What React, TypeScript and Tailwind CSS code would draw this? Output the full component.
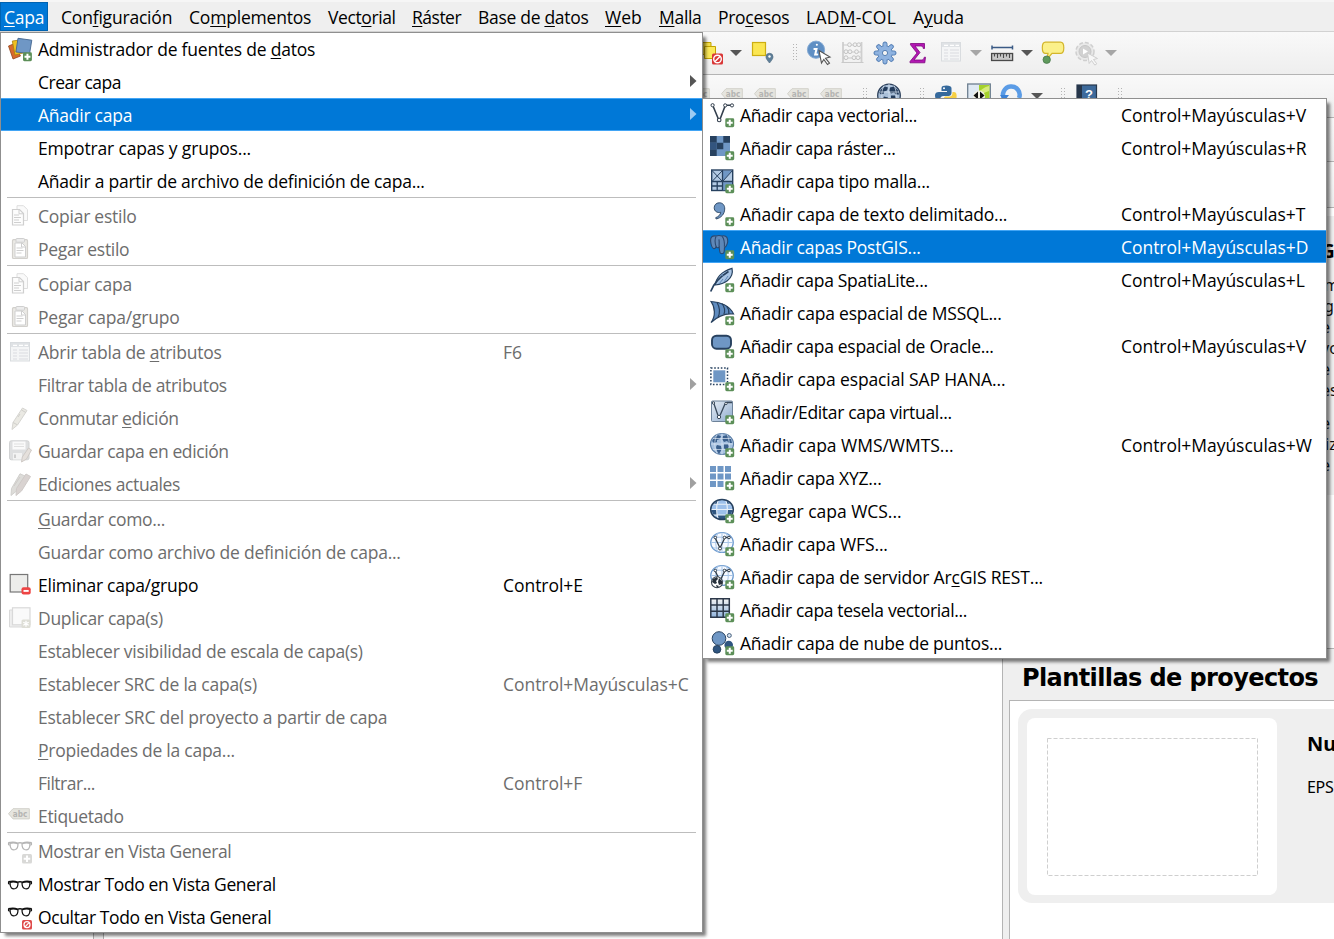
import React from "react";

type IconFn = () => React.ReactNode;

const NAVY = "#27415f";
const BLUE = "#6f97c5";

function Plus() {
  return (
    <g>
      <rect x="15.3" y="15.3" width="8.9" height="8.9" rx="1.4" fill="#5c8f58" />
      <path d="M19.75 16.800v5.900M16.800 19.750h5.900" stroke="#fff" strokeWidth="2" />
    </g>
  );
}

function Svg({ children, className = "" }: { children: React.ReactNode; className?: string }) {
  return (
    <svg viewBox="0 0 24 24" className={"block h-6 w-6 shrink-0 overflow-visible " + className} fill="none">
      {children}
    </svg>
  );
}

/* ---------- submenu icons ---------- */

const VectorIcon: IconFn = () => (
  <Svg>
    <g stroke="#333f4d" strokeWidth="1.6" fill="#fff">
      <path d="M3.200 3.500 8.300 15.800M10.200 15.800 14.800 3.700M16.500 2.300h5" fill="none" />
      <circle cx="2.600" cy="2.200" r="1.600" strokeWidth="1" />
      <circle cx="15.200" cy="2.400" r="1.600" strokeWidth="1" />
      <circle cx="22" cy="2.400" r="1.600" strokeWidth="1" />
      <circle cx="9.200" cy="17" r="1.800" strokeWidth="1.100" />
    </g>
    <Plus />
  </Svg>
);
const RasterIcon: IconFn = () => (
  <Svg>
    <rect width="20" height="20" fill={BLUE} />
    <path d="M0 0h6.700v6.700H0zM13.300 0H20v6.700h-6.700zM6.700 6.700h6.600v6.600H6.700zM0 13.300h6.700V20H0z" fill={NAVY} />
    <path d="M0 6.700h6.700v6.600H0z" fill="#33557f" />
    <Plus />
  </Svg>
);
const MeshIcon: IconFn = () => (
  <Svg>
    <rect x="1.700" y="1" width="21" height="20.500" fill="#b3cae3" stroke={NAVY} strokeWidth="1.400" />
    <path d="M13 1.700h9L13 12z" fill="#6f97c5" />
    <path d="M12.500 13.200h9.500v8h-9.500z" fill="#6f97c5" />
    <path d="M12.500 21V1M2 12.500h20.500M7.200 12.500V21M2 17h10.500" stroke={NAVY} strokeWidth="1.300" />
    <path d="M2 1.500l10.500 11M12.500 1.500 2 12.500M22.500 1.500 13 12" stroke={NAVY} strokeWidth="1" />
    <Plus />
  </Svg>
);
const CommaIcon: IconFn = () => (
  <Svg>
    <path d="M9.300.8c3.600 0 5.600 2.600 5.400 6.300-.2 4.800-3.200 8.600-8.500 9.900l-.5-1.300c3-1.200 4.700-2.900 5-5.400-3.500.9-6.500-1.100-6.500-4.500C4.200 2.900 6.300.8 9.300.8z" fill="#6f97c5" stroke={NAVY} strokeWidth=".9" />
    <Plus />
  </Svg>
);
const ElephantIcon: IconFn = () => (
  <Svg>
    <path d="M6 1C2.500.3.200 2 .6 6c.4 4 1.600 7 3 7.600 1.200.4 1.800-.8 2.600-1.600.6 1 2.300.8 3 .3.300 2.700.2 4.700 1.200 5.800 1.300 1.100 3.300.6 3.700-1.300.3-1.800.2-2.800.4-4.200 2.200-1.300 3.700-5.300 3.100-8.300C17 1.200 14.500.2 12 1.100 10 .2 8 .3 6 1z" fill="#5f88b8" stroke="#2a4870" strokeWidth="1.100" />
    <path d="M6 1.500c-1.500 3-1.300 6 .2 10.500M12.200 1.300c2 2.500 2.500 5 2.200 10.500M9.300 12.300c-.6-3 .4-5-.4-8" stroke="#2a4870" strokeWidth="1.100" />
    <Plus />
  </Svg>
);
const FeatherIcon: IconFn = () => (
  <Svg>
    <path d="M22 .3c1 4.200-.5 9-4.700 12.500-3 2.400-7 3.700-12 4.200C6 10.500 11 3.500 22 .3z" fill="#a8c4e4" stroke={NAVY} strokeWidth="1.200" />
    <path d="M.7 23.500C3 17 8 10 18.500 3.500" stroke={NAVY} strokeWidth="1.700" />
    <path d="M9 16l4-5M14 14l4-6M12 6l1 2" stroke="#5f87b5" strokeWidth="1" />
    <Plus />
  </Svg>
);
const MssqlIcon: IconFn = () => (
  <Svg>
    <path d="M1 .5c9 .3 19 4 22.500 12.500C16 12 9 14 1 21.500 6 15 5 6 1 .5z" fill="#5f8cc0" stroke={NAVY} strokeWidth="1.200" />
    <path d="M7 1.500c3 5 3.300 10 1 15M12 2.500c3 4 3.500 7 1.800 11M16.500 5c2 2.500 2.800 5 2.300 8" stroke={NAVY} strokeWidth="1.200" />
    <Plus />
  </Svg>
);
const OracleIcon: IconFn = () => (
  <Svg>
    <rect x="2" y="1.700" width="19" height="13" rx="4.500" fill={BLUE} stroke={NAVY} strokeWidth="1.900" />
    <Plus />
  </Svg>
);
const HanaIcon: IconFn = () => (
  <Svg>
    <rect x="3.300" y="3.300" width="12" height="12" fill={BLUE} />
    <rect x=".9" y=".9" width="16.600" height="16.600" stroke={NAVY} strokeWidth="1.500" strokeDasharray="1.600 1.700" />
    <Plus />
  </Svg>
);
const VirtualIcon: IconFn = () => (
  <Svg>
    <defs>
      <linearGradient id="virt" x1="0" y1="0" x2="1" y2="1">
        <stop offset="0" stopColor="#e6edf5" />
        <stop offset="1" stopColor="#8faccf" />
      </linearGradient>
    </defs>
    <rect x="1.500" y="1" width="21" height="20.500" rx="1" fill="url(#virt)" stroke="#6d8299" />
    <path d="M2 2.500h1.500l4.500 13M10 15.500l5-11.500 2-1.500h5" stroke="#3a4a5c" strokeWidth="1.300" />
    <circle cx="9" cy="17" r="1.700" fill="#fff" stroke="#3a4a5c" />
    <circle cx="3.500" cy="3" r="1.200" fill="#fff" stroke="#3a4a5c" />
    <circle cx="16" cy="3.500" r="1.200" fill="#fff" stroke="#3a4a5c" />
    <Plus />
  </Svg>
);
const worldLand = "M4 5l4-3 3 1-1 3-3 1 0 2-3 1-2-2zM13 3l4-1 4 4 1 4-3 0-2-2-3 1-2-3zM7 12l4 1 1 3-3 5-2-3-1-4zM14 11l4 0 1 3-3 4-2-3z";
const WmsIcon: IconFn = () => (
  <Svg>
    <ellipse cx="12" cy="11" rx="11.500" ry="10.500" fill="#a6c1e0" stroke="#5b7ea6" strokeWidth="1.200" />
    <path d={worldLand} fill="#3a5f8c" />
    <path d="M1 11h22M3 5.500h18M12 .5v21M7 1.500c-3 6-3 13 0 19M17 1.500c3 6 3 13 0 19M3 16.500h18" stroke="#dbe7f3" strokeWidth=".7" />
    <Plus />
  </Svg>
);
const XyzIcon: IconFn = () => (
  <Svg>
    <path d="M0 0h6v6H0zM7.500 0h6v6h-6zM15 0h6v6h-6zM0 7.500h6v6H0zM7.500 7.500h6v6h-6zM15 7.500h6v6h-6zM0 15h6v6H0zM7.500 15h6v6h-6z" fill={BLUE} />
    <Plus />
  </Svg>
);
const WcsIcon: IconFn = () => (
  <Svg>
    <ellipse cx="12" cy="10.500" rx="11.300" ry="10" fill="#9dc0ea" />
    <path d="M1 10.500h6V16H3.500zM17 10.500h6L20.500 16H17zM7 16h10l-2 4.300H9zM3.500 5.200 8 1.500 7 5.200zM20.500 5.200 16 1.500l1 3.700z" fill="#2f5580" />
    <path d="M1 10.500h22M3 5.200h18M3 16h18M8 1.500C6.300 7 6.300 14 8 19.500M16 1.500c1.700 5.500 1.700 12.500 0 18" stroke="#eaf1f8" strokeWidth="1.100" />
    <ellipse cx="12" cy="10.500" rx="11.300" ry="10" stroke={NAVY} strokeWidth="1.500" />
    <Plus />
  </Svg>
);
const WfsGlobe = () => (
  <g>
    <ellipse cx="12" cy="10.500" rx="11.300" ry="10" fill="#f7faff" stroke="#6c9ace" strokeWidth="1.200" />
    <path d="M1 10.500h22M3 5.200h18M3 16h18M12 .5v20M8 1C5 7 5 14 8 20M16 1c3 6 3 13 0 19" stroke="#a9c6e8" strokeWidth="1" />
    <path d="M5.500 6.500 9.500 15M10.500 15l4-8.500M15 5.500h4" stroke="#2d3945" strokeWidth="1.300" />
    <g fill="#fff" stroke="#2d3945">
      <circle cx="5.300" cy="5.500" r="1.300" />
      <circle cx="14.500" cy="5.500" r="1.300" />
      <circle cx="19" cy="5.500" r="1.300" />
      <circle cx="10" cy="16.500" r="1.500" />
    </g>
  </g>
);
const WfsIcon: IconFn = () => (
  <Svg>
    <WfsGlobe />
    <Plus />
  </Svg>
);
const ArcgisIcon: IconFn = () => (
  <Svg>
    <WfsGlobe />
    <circle cx="7" cy="17.300" r="5.500" fill="#fff" stroke="#39434d" strokeWidth="1.100" />
    <path d="M3 14l4-2 1 2-2 2 1 2-2 1-3-2zM9 13l3 3 0 3-3 1-1-3zM6 20l3 1-2 2z" fill="#27313b" />
    <Plus />
  </Svg>
);
const TileIcon: IconFn = () => (
  <Svg>
    <defs>
      <linearGradient id="tile" x1="0" y1="0" x2="0" y2="1">
        <stop offset="0" stopColor="#f3f3f3" />
        <stop offset="1" stopColor="#8fb3dc" />
      </linearGradient>
    </defs>
    <rect x=".8" y=".8" width="18.500" height="18.500" fill="url(#tile)" />
    <path d="M.8.8h18.500v18.500H.8zM7 .8v18.500M13.200.8v18.500M.8 7h18.500M.8 13.200h18.500" stroke="#2c3849" strokeWidth="1.500" />
    <Plus />
  </Svg>
);
const CloudIcon: IconFn = () => (
  <Svg>
    <circle cx="9" cy="7.500" r="6.800" fill={BLUE} stroke={NAVY} strokeWidth="1" />
    <circle cx="19.300" cy="4.500" r="2" fill="#d7e3f0" stroke="#48617e" />
    <circle cx="18.700" cy="14" r="4.300" fill="#2f5580" />
    <circle cx="7" cy="18.300" r="3.900" fill="#2f5580" stroke="#1f3853" strokeWidth=".8" />
    <Plus />
  </Svg>
);

/* ---------- main menu icons ---------- */

const SourcesIcon: IconFn = () => (
  <Svg>
    <path d="M.5 8l5-2 7 12-7.500 3z" fill="#d9692b" stroke="#8f431c" strokeWidth=".8" />
    <path d="M4.300 3l7.700-1 3 13-8 2z" fill="#f0c020" stroke="#a8810c" strokeWidth=".8" />
    <path d="M10 .3l13.800 1.900-2.200 13.300L7.900 14z" fill="#6f97c5" stroke="#43658f" strokeWidth=".9" />
    <g transform="translate(-.3 -1)">
      <Plus />
    </g>
  </Svg>
);
const CopyIcon: IconFn = () => (
  <Svg>
    <path d="M9 .7h6.500l4 4V15.500H9z" fill="#fafafa" stroke="#dedede" />
    <path d="M4.500 4.500h7l4 4V20h-11z" fill="#fdfdfd" stroke="#cfcfcf" strokeWidth="1.200" />
    <path d="M11 4.800v4h4M6 10h5M6 12.500h7M6 15h5M6 17.500h7" stroke="#cfcfcf" />
  </Svg>
);
const PasteIcon: IconFn = () => (
  <Svg>
    <rect x="4.500" y="1.700" width="15" height="18.800" rx="1" fill="#ebeae6" stroke="#d2d0cc" strokeWidth="1.200" />
    <path d="M7 5h7l3.500 3.500v10.500H7z" fill="#fff" stroke="#cfcfcf" />
    <path d="M8.500 10h6M8.500 12.500h7M8.500 15h5M13.500 5v4h4" stroke="#cfcfcf" />
    <rect x="8" y=".5" width="8.500" height="3.700" rx=".8" fill="#ececec" stroke="#cfcfcf" />
  </Svg>
);
const TableIcon: IconFn = () => (
  <Svg>
    <rect x="2.500" y="1.500" width="19" height="18.500" fill="#f4f5f6" stroke="#d9dcdf" />
    <path d="M3 2h18v4H3z" fill="#dfe2e5" />
    <path d="M5 4.300h4M11 4.300h4M16.500 4.300H20" stroke="#fff" strokeWidth="1.200" />
    <path d="M5 9h4M11 9h9M5 12h4M11 12h9M5 15h4M11 15h9M5 18h4M11 18h9" stroke="#d9dcdf" strokeWidth="1.200" />
  </Svg>
);
const PencilIcon: IconFn = () => (
  <Svg>
    <path d="M14.500 1l4.500 2.500L9.500 18 4 22.500l1-7z" fill="#eae9e3" stroke="#d6d5d1" />
    <path d="M13.500 3l4.300 2.500M5 15.500l4.300 2.300M10 10l2-3" stroke="#d0cfcb" />
  </Svg>
);
const SaveEditIcon: IconFn = () => (
  <Svg>
    <rect x="1.500" y=".8" width="19.500" height="19" rx="1.800" fill="#dedfe0" stroke="#d1d2d3" />
    <rect x="4.500" y="1.500" width="13" height="8" fill="#fafafa" />
    <path d="M6 4h10M6 6.500h10" stroke="#e0e0e0" />
    <rect x="5" y="13" width="9" height="6.500" fill="#f3f3f3" />
    <path d="M7 14.500v3.500" stroke="#cfcfcf" strokeWidth="2" />
    <path d="M20.500 8l3 2-5 9-5 3 .8-5z" fill="#e5e0dc" stroke="#cfcac6" />
  </Svg>
);
const EditsIcon: IconFn = () => (
  <Svg>
    <path d="M12 .8 17 3 8.500 18 3 22.500l.5-7z" fill="#dddcd9" stroke="#d1d0cd" />
    <path d="M18 1l4.500 2.500L13.500 18 8 22.500l.5-7z" fill="#d9d3d1" stroke="#cfcac8" />
    <path d="M6 13l6-9" stroke="#cfccc9" />
  </Svg>
);
const RemoveIcon: IconFn = () => (
  <Svg>
    <rect x="2.200" y=".5" width="17.500" height="17.500" fill="#ededeb" stroke="#777" strokeWidth="1.200" />
    <rect x="13.500" y="13.300" width="9.200" height="7.200" rx="2" fill="#ee4444" />
    <path d="M15.500 16.900h5.200" stroke="#fff" strokeWidth="1.900" />
  </Svg>
);
const DuplicateIcon: IconFn = () => (
  <Svg>
    <path d="M4 3H1.500v17H18" fill="#eee" stroke="#d9d9d9" />
    <rect x="4.500" y=".8" width="17.500" height="17" fill="#fafafa" stroke="#d9d9d9" strokeWidth="1.200" />
    <rect x="13.500" y="12.500" width="9" height="8.500" rx="1.500" fill="#deded6" />
    <path d="M18 13.700v6M15.300 15.200l5.400 3M15.300 18.200l5.400-3" stroke="#fff" strokeWidth="1.300" />
  </Svg>
);

function LabelTag({ className = "" }: { className?: string }) {
  return (
    <svg viewBox="0 0 22 12" className={"block h-3 w-[22px] shrink-0 " + className}>
      <path d="M.5 5.700 5 .7h16.300v10.200H5z" fill="#e6e5df" stroke="#d2d1ca" />
      <text x="4.800" y="8.900" fontSize="8.500" fontWeight="700" fill="#b4b4b2" fontFamily="DejaVu Sans, sans-serif" textLength="14.500" lengthAdjust="spacingAndGlyphs">
        abc
      </text>
    </svg>
  );
}
const LabelIcon: IconFn = () => <LabelTag className="mb-[9px] self-end" />;

const glasses = (c: string) => (
  <g>
    <path d="M.3 1.300c3-.8 6.700-.8 9.200.3 1.500-.5 3.500-.5 5 0 2.500-1.100 6.200-1.100 9.200-.3" stroke={c} strokeWidth="1.500" />
    <path d="M2 2c2-.6 5.500-.6 8 .3 0 2.700-.7 5-2.500 5.700-1.400.5-3 .3-4-.5C2.400 6.400 2 4 2 2zM22 2c-2-.6-5.500-.6-8 .3 0 2.700.7 5 2.500 5.700 1.400.5 3 .3 4-.5C21.600 6.400 22 4 22 2z" stroke={c} strokeWidth="1.250" />
    <path d="M.5 1.300v1.900l1.300.6M23.500 1.300v1.900l-1.300.6" stroke={c} strokeWidth="1.100" />
  </g>
);
const GlassesPlusIcon: IconFn = () => (
  <Svg>
    <g transform="translate(0 1.500)">{glasses("#b5b5b5")}</g>
    <rect x="14" y="14" width="10" height="9.500" rx="1.500" fill="#d9d9d7" />
    <path d="M19 15.500v6.500M15.700 18.700h6.500" stroke="#fff" strokeWidth="2" />
  </Svg>
);
const GlassesIcon: IconFn = () => (
  <Svg>
    <g transform="translate(0 7.500)">{glasses("#111")}</g>
  </Svg>
);
const GlassesOffIcon: IconFn = () => (
  <Svg>
    <g transform="translate(0 1.500)">{glasses("#111")}</g>
    <rect x="14" y="14" width="10" height="9.500" rx="1.500" fill="#df4b4b" />
    <circle cx="19" cy="18.700" r="3" stroke="#fff" strokeWidth="1.200" />
    <path d="M17 20.800l4-4.200" stroke="#fff" strokeWidth="1.200" />
  </Svg>
);

/* ---------- menus ---------- */

const T0 = "tracking-[-0.03px]";
const T1 = "tracking-[-0.12px]";
const T2 = "tracking-[-0.2px]";
const T3 = "tracking-[-0.25px]";
const T4 = "tracking-[-0.32px]";
const T5 = "tracking-[-0.39px]";
const T6 = "tracking-[-0.5px]";

type Item = {
  label: string;
  track: string;
  icon?: IconFn;
  key?: string;
  off?: boolean;
  arrow?: boolean;
  active?: boolean;
};

/* "&(x)" marks the letters that are underlined as the mnemonic. */
function Mnemonic({ text }: { text: string }) {
  const m = text.match(/^(.*)&\((.+?)\)(.*)$/);
  if (!m) return <>{text}</>;
  return (
    <>
      {m[1]}
      <span className="underline decoration-1 underline-offset-2">{m[2]}</span>
      {m[3]}
    </>
  );
}

const mainItems: (Item | null)[] = [
  { label: "Administrador de fuentes de &(d)atos", icon: SourcesIcon, track: T2 },
  { label: "Crear capa", arrow: true, track: T6 },
  { label: "Añadir capa", arrow: true, active: true, track: T3 },
  { label: "Empotrar capas y grupos...", track: "tracking-[-0.17px]" },
  { label: "Añadir a partir de archivo de definición de capa...", track: "tracking-[-0.24px]" },
  null,
  { label: "Copiar estilo", icon: CopyIcon, off: true, track: T3 },
  { label: "Pegar estilo", icon: PasteIcon, off: true, track: T4 },
  null,
  { label: "Copiar capa", icon: CopyIcon, off: true, track: T3 },
  { label: "Pegar capa/grupo", icon: PasteIcon, off: true, track: T2 },
  null,
  { label: "Abrir tabla de &(a)tributos", icon: TableIcon, key: "F6", off: true, track: T3 },
  { label: "Filtrar tabla de atributos", arrow: true, off: true, track: T4 },
  { label: "Conmutar &(e)dición", icon: PencilIcon, off: true, track: T4 },
  { label: "Guardar capa en edición", icon: SaveEditIcon, off: true, track: T5 },
  { label: "Ediciones actuales", icon: EditsIcon, arrow: true, off: true, track: T5 },
  null,
  { label: "&(G)uardar como...", off: true, track: T4 },
  { label: "Guardar como archivo de definición de capa...", off: true, track: T3 },
  { label: "Eliminar capa/grupo", icon: RemoveIcon, key: "Control+E", track: T3 },
  { label: "Duplicar capa(s)", icon: DuplicateIcon, off: true, track: T4 },
  { label: "Establecer visibilidad de escala de capa(s)", off: true, track: "tracking-[-0.28px]" },
  { label: "Establecer SRC de la capa(s)", key: "Control+Mayúsculas+C", off: true, track: T3 },
  { label: "Establecer SRC del proyecto a partir de capa", off: true, track: "tracking-[-0.22px]" },
  { label: "&(P)ropiedades de la capa...", off: true, track: T3 },
  { label: "Filtrar...", key: "Control+F", off: true, track: T6 },
  { label: "Etiquetado", icon: LabelIcon, off: true, track: T4 },
  null,
  { label: "Mostrar en Vista General", icon: GlassesPlusIcon, off: true, track: T5 },
  { label: "Mostrar Todo en Vista General", icon: GlassesIcon, track: "tracking-[-0.37px]" },
  { label: "Ocultar Todo en Vista General", icon: GlassesOffIcon, track: "tracking-[-0.37px]" },
];

const subItems: Item[] = [
  { label: "Añadir capa vectorial...", icon: VectorIcon, key: "Control+Mayúsculas+V", track: T4 },
  { label: "Añadir capa ráster...", icon: RasterIcon, key: "Control+Mayúsculas+R", track: T5 },
  { label: "Añadir capa tipo malla...", icon: MeshIcon, track: T3 },
  { label: "Añadir capa de texto delimitado...", icon: CommaIcon, key: "Control+Mayúsculas+T", track: T2 },
  { label: "Añadir capas PostGIS...", icon: ElephantIcon, key: "Control+Mayúsculas+D", active: true, track: T3 },
  { label: "Añadir capa SpatiaLite...", icon: FeatherIcon, key: "Control+Mayúsculas+L", track: "tracking-[-0.3px]" },
  { label: "Añadir capa espacial de MSSQL...", icon: MssqlIcon, track: T2 },
  { label: "Añadir capa espacial de Oracle...", icon: OracleIcon, key: "Control+Mayúsculas+V", track: "tracking-[-0.3px]" },
  { label: "Añadir capa espacial SAP HANA...", icon: HanaIcon, track: T1 },
  { label: "Añadir/Editar capa virtual...", icon: VirtualIcon, track: T4 },
  { label: "Añadir capa WMS/WMTS...", icon: WmsIcon, key: "Control+Mayúsculas+W", track: T0 },
  { label: "Añadir capa XYZ...", icon: XyzIcon, track: T2 },
  { label: "Agregar capa WCS...", icon: WcsIcon, track: T0 },
  { label: "Añadir capa WFS...", icon: WfsIcon, track: T1 },
  { label: "Añadir capa de servidor Ar&(c)GIS REST...", icon: ArcgisIcon, track: "tracking-[-0.18px]" },
  { label: "Añadir capa tesela vectorial...", icon: TileIcon, track: "tracking-[-0.34px]" },
  { label: "Añadir capa de nube de puntos...", icon: CloudIcon, track: "tracking-[-0.22px]" },
];

function Row({ item, keyWidth, iconShift }: { item: Item; keyWidth: string; iconShift: string }) {
  const tone = item.active
    ? "border-[#42a5f5] bg-[#0078d7] text-white"
    : item.off
      ? "border-transparent text-[#6d6d6d]"
      : "border-transparent text-black";
  return (
    <div className={"flex h-[33px] items-center border-y pl-[7px] pr-[7px] " + tone}>
      <div className={"flex h-6 w-[30px] shrink-0 " + iconShift}>{item.icon ? item.icon() : null}</div>
      <div className={"grow whitespace-nowrap pt-[2px] leading-[29px] " + item.track}>
        <Mnemonic text={item.label} />
      </div>
      {item.key ? (
        <div className={"shrink-0 whitespace-nowrap pt-[2px] leading-[29px] tracking-[-0.04px] " + keyWidth}>{item.key}</div>
      ) : null}
      {item.arrow ? (
        <svg viewBox="0 0 7 12" className={"-mr-0.5 mb-0.5 h-3 w-[7px] " + (item.active ? "text-[#9ccbf2]" : item.off ? "text-[#a0a0a0]" : "text-[#555]")}>
          <path d="M0 0l6.500 6L0 12z" fill="currentColor" />
        </svg>
      ) : null}
    </div>
  );
}

const menuBox = "absolute border border-[#8f8f8f] bg-white shadow-[4px_4px_3px_-1px_rgba(0,0,0,0.5)]";

/* ---------- background window ---------- */

function Grip() {
  return (
    <svg viewBox="0 0 4 18" className="h-[18px] w-1 shrink-0">
      {[0, 3, 6, 9, 12, 15].map((y) => (
        <path key={y} d={`M0 ${y + 0.5}h1M3 ${y + 0.5}h1`} stroke="#b4b4b4" />
      ))}
    </svg>
  );
}

function Caret({ light = false }: { light?: boolean }) {
  return (
    <svg viewBox="0 0 12 6" className="h-1.5 w-3 shrink-0">
      <path d="M0 0h12L6 6z" fill={light ? "#a6a6a6" : "#565656"} />
    </svg>
  );
}

function Slot({ className, children }: { className: string; children: React.ReactNode }) {
  return <div className={"flex shrink-0 items-center " + className}>{children}</div>;
}

const gearPath = () => (
  <g>
    {[0, 45, 90, 135].map((a) => (
      <rect key={a} x="10" y="1" width="4" height="22" rx="1.800" transform={`rotate(${a} 12 12)`} fill="#7ba3d6" stroke="#4a76ad" strokeWidth=".9" />
    ))}
    <circle cx="12" cy="12" r="7.300" fill="#8fb3e0" stroke="#4a76ad" strokeWidth=".8" />
    {[0, 45, 90, 135].map((a) => (
      <rect key={a} x="10.500" y="2" width="3" height="20" rx="1.500" transform={`rotate(${a} 12 12)`} fill="#8fb3e0" />
    ))}
    <circle cx="12" cy="12" r="2.600" fill="#f4f4f4" stroke="#4a76ad" strokeWidth=".9" />
  </g>
);

function Toolbar() {
  return (
    <div className="flex h-[43px] shrink-0 items-center border-b border-[#b4b4b4] bg-gradient-to-b from-[#f9f9f9] to-[#eeeeee] pl-[699px]">
      <Slot className="w-6">
        <Svg>
          <path d="M0 1.500h12v12H0z" fill="#f5e04a" stroke="#c2a300" />
          <path d="M5.500 5.500h11v12h-11z" fill="#fbe95a" stroke="#c2a300" />
          <rect x="13" y="12.500" width="11" height="11" rx="1.500" fill="#d93636" />
          <circle cx="18.500" cy="18" r="3.800" stroke="#fff" strokeWidth="1.400" />
          <path d="M16 20.500l5-5" stroke="#fff" strokeWidth="1.400" />
        </Svg>
      </Slot>
      <Slot className="ml-[7px]"><Caret /></Slot>
      <Slot className="ml-[10px] w-6">
        <Svg>
          <rect x=".5" y="1.500" width="13" height="13" fill="#fbe652" stroke="#cdae12" strokeWidth="1.200" />
          <path d="M17.500 22c-2.600-3.200-3.500-4.500-3.500-6.200a3.500 3.500 0 0 1 7 0c0 1.700-.9 3-3.500 6.200z" fill="#5e7f99" stroke="#4d6a80" strokeWidth=".7" />
          <circle cx="17.500" cy="15.500" r="1.200" fill="#fff" />
        </Svg>
      </Slot>
      <Slot className="ml-[17px]"><Grip /></Slot>
      <Slot className="ml-[10px] w-6">
        <Svg>
          <circle cx="9" cy="8.700" r="8.600" fill="#5f8fc4" stroke="#86abd4" />
          <path d="M9.800 3.700h.1M7.300 8h2.200l-1.300 5.500h2" stroke="#fff" strokeWidth="2" strokeLinecap="round" />
          <path d="M12 9.500l11 6.500-4.500 1.200 4 5-2 1.300-3.700-5-2.300 3.500z" fill="#fff" stroke="#555" strokeWidth="1.100" />
        </Svg>
      </Slot>
      <Slot className="ml-[10px] w-6">
        <Svg>
          <path d="M2 1v21M20.500 1v21" stroke="#cfcfcf" strokeWidth="1.800" />
          <path d="M.5 21.500h22M2 4h18M2 11h18M2 17h18" stroke="#c9c9c9" strokeWidth="1.200" />
          <g fill="#f2f2f2" stroke="#c4c4c4">
            {[[8.5, 3.7], [14, 3.7], [17.8, 3.7], [5, 10.7], [9, 10.7], [15.5, 10.7], [5, 16.7], [13, 16.7], [17, 16.7]].map(([x, y]) => (
              <circle key={`${x}-${y}`} cx={x} cy={y} r="1.900" />
            ))}
          </g>
        </Svg>
      </Slot>
      <Slot className="ml-[8px] w-6"><Svg>{gearPath()}</Svg></Slot>
      <Slot className="ml-[9px] w-6">
        <Svg>
          <path d="M4.500 2.500h14v5h-1.200c-.3-1.800-1-2.500-2.800-2.500H9l5 6.500-6 7.500h7.300c1.600 0 2.500-.8 3-2.800h1.200l-.7 5.600H4v-1.300l7-8.500-6.500-8.200z" fill="#b217b2" stroke="#7d067f" strokeWidth=".8" />
        </Svg>
      </Slot>
      <Slot className="ml-[9px] w-6"><TableIcon /></Slot>
      <Slot className="ml-[7px]"><Caret light /></Slot>
      <Slot className="ml-[8px] w-6">
        <Svg>
          <path d="M2 6.500h20.500M2 4.500v4M22.500 4.500v4" stroke="#3a5a85" strokeWidth="1.500" />
          <rect x="1.600" y="12.500" width="21" height="7" fill="#c9c9c9" stroke="#4a4a4a" strokeWidth="1.300" />
          <path d="M4.500 12.500v3M7.500 12.500v4.500M10.500 12.500v3M13.500 12.500v4.500M16.500 12.500v3M19.500 12.500v4.500" stroke="#4a4a4a" strokeWidth="1.100" />
        </Svg>
      </Slot>
      <Slot className="ml-[7px]"><Caret /></Slot>
      <Slot className="ml-[8px] w-6">
        <Svg>
          <path d="M4.500 1.200h15c2 0 3.300 1.500 3.300 5.500s-1.300 5.700-3.300 5.700h-8.500l-5 6 1-6H4.500c-2 0-3.200-1.500-3.200-5.700s1.200-5.500 3.200-5.500z" fill="#fbf08a" stroke="#d3b52a" strokeWidth="1.200" />
          <circle cx="5.700" cy="18.700" r="3.700" fill="#5f9a5c" stroke="#47774a" strokeWidth=".8" />
        </Svg>
      </Slot>
      <Slot className="ml-[9px] w-6">
        <Svg>
          <circle cx="11" cy="10.500" r="9" fill="#e9e9e9" stroke="#cfcfcf" strokeWidth="1.500" strokeDasharray="4 2" />
          <circle cx="11" cy="10.500" r="6" fill="#d2d2d2" stroke="#c6c6c6" />
          <path d="M9 7.500l5 3-5 3z" fill="#fff" />
          <path d="M13.500 12l10 5.500-4 1 3.300 4.300-2 1.300-3.300-4.600-2.300 3z" fill="#f7f7f7" stroke="#cfcfcf" />
        </Svg>
      </Slot>
      <Slot className="ml-[7px]"><Caret light /></Slot>
    </div>
  );
}

function Toolbar2() {
  return (
    <div className="flex h-[43px] shrink-0 items-start border-b border-[#b4b4b4] bg-gradient-to-b from-[#f9f9f9] to-[#eeeeee] pl-[688px] pt-[8px]">
      <LabelTag className="mt-[5px]" />
      <LabelTag className="ml-[11px] mt-[5px]" />
      <LabelTag className="ml-[11px] mt-[5px]" />
      <LabelTag className="ml-[11px] mt-[5px]" />
      <LabelTag className="ml-[11px] mt-[5px]" />
      <Slot className="ml-[21px] mt-[5px]"><Grip /></Slot>
      <Slot className="ml-[10px] w-6">
        <Svg>
          <circle cx="12" cy="12.500" r="11.300" fill="#a9bfd8" stroke="#2b3f5a" strokeWidth="1.300" />
          <path d={worldLand} fill="#233c5c" transform="translate(0 1.500)" />
          <path d="M2 9h20M12 1v22M7 2.500c-3 6-3 13 0 19M17 2.500c3 6 3 13 0 19" stroke="#dbe7f3" strokeWidth=".7" />
        </Svg>
      </Slot>
      <Slot className="ml-[19px] mt-[5px]"><Grip /></Slot>
      <Slot className="ml-[10px] w-6">
        <Svg>
          <g transform="translate(1 0)">
            <path d="M6.500 5c0-1.800 2-2.500 5-2.500s5 .8 5 2.800V10c0 2-1.500 3-3 3H8.500C6 13 5 15 5 17H3c-2 0-3-2-3-4.500S1.500 9 4 9h8V8H6.500z" fill="#35699c" />
            <path d="M17.500 9H19c2.500 0 3 3 2.500 6H9c0-1 1-1.500 2-1.500h3.500c2 0 3-1.500 3-4.500z" fill="#f6cf43" />
            <circle cx="9" cy="5.300" r="1" fill="#fff" />
          </g>
        </Svg>
      </Slot>
      <Slot className="ml-[9px] w-6">
        <Svg>
          <rect x=".7" y="1" width="22.600" height="21" fill="#dfe9f3" stroke="#6d7f90" strokeWidth="1.300" />
          <path d="M12 2h10.500V16H12z" fill="#a5d12c" />
          <path d="M12 8c3-1 5-4 10-5v5c-4 1-6 3-10 4z" fill="#d7ec7c" />
          <circle cx="12" cy="13.500" r="6" fill="#f2f2e6" />
          <path d="M11 8.500v8l-4.500-4zM13 8.500v8l4.500-4z" fill="#111" />
        </Svg>
      </Slot>
      <Slot className="ml-[9px] w-6">
        <Svg>
          <path d="M4.500 16.500A8.300 8.300 0 1 1 19 15" stroke="#5b9ce6" strokeWidth="4.500" />
          <path d="M0 12h9l-4.500 6z" fill="#3c82d6" />
        </Svg>
      </Slot>
      <Slot className="ml-[7px] mt-[10px]"><Caret /></Slot>
      <Slot className="ml-[18px] mt-[5px]"><Grip /></Slot>
      <Slot className="ml-[10px] w-6">
        <Svg>
          <rect x="2" y="2" width="19.500" height="21" fill="#3d6a9b" stroke="#27384c" strokeWidth="1.200" />
          <path d="M2 2h5v21H2z" fill="#26364a" />
          <text x="10" y="15.500" fontSize="13" fontWeight="700" fill="#fff" fontFamily="Liberation Sans, sans-serif">?</text>
        </Svg>
      </Slot>
      <Slot className="ml-[19px] mt-[5px]"><Grip /></Slot>
    </div>
  );
}

const menuBar: [string, string][] = [
  ["Con&(f)iguración", "w-[128px] tracking-[-0.2px]"],
  ["Co&(m)plementos", "w-[139px] tracking-[-0.2px]"],
  ["Vect&(o)rial", "w-[84px] tracking-[-0.4px]"],
  ["&(R)áster", "w-[66px] tracking-[-0.5px]"],
  ["Base de &(d)atos", "w-[127px] tracking-[-0.3px]"],
  ["&(W)eb", "w-[54px]"],
  ["&(M)alla", "w-[59px] tracking-[-0.3px]"],
  ["Pro&(c)esos", "w-[88px] tracking-[-0.3px]"],
  ["LAD&(M)-COL", "w-[107px] tracking-[0.25px]"],
  ["A&(y)uda", "w-[60px]"],
];

const docLines: [string, string][] = [
  ["m", "pl-[3px]"],
  ["g", "pl-[3px]"],
  ["e", ""],
  ["yo", ""],
  ["e", ""],
  ["es", "mb-3"],
  ["e", ""],
  ["iz", "pl-[4px]"],
  ["e", ""],
];

export default function App() {
  return (
    <div className="relative flex h-[939px] w-[1334px] flex-col overflow-hidden bg-white font-['Open_Sans','Noto_Sans',sans-serif] text-[17.5px] text-black">
      <div className="flex h-[31px] shrink-0 border-t-2 border-[#f6f6f6] bg-[#efefef] leading-[31px]">
        <div className="h-[29px] w-12 border border-[#0063b1] bg-[#0078d7] pl-[3px] leading-[29px] tracking-[-0.2px] text-white">
          <Mnemonic text="&(C)apa" />
        </div>
        <div className="flex pl-[13px]">
          {menuBar.map(([label, width]) => (
            <div key={label} className={"whitespace-nowrap " + width}>
              <Mnemonic text={label} />
            </div>
          ))}
        </div>
      </div>
      <div className="h-px shrink-0 bg-[#d2d2d2]" />
      <Toolbar />
      <Toolbar2 />
      <div className="h-11 shrink-0 border-b border-[#b4b4b4] bg-gradient-to-b from-[#f9f9f9] to-[#eeeeee]" />
      <div className="h-[46px] shrink-0 border-b border-[#b4b4b4] bg-gradient-to-b from-[#f9f9f9] to-[#eeeeee]" />

      <div className="flex grow">
        <div className="flex w-[1002px] shrink-0 items-end">
          <div className="ml-[93px] h-2 w-[11px] border-x border-[#b0b0b0] bg-[#efefef]" />
        </div>
        <div className="flex w-[332px] flex-col font-['Noto_Sans',sans-serif]">
          <div className="mt-2 h-[279px] shrink-0 overflow-hidden bg-[#efefef] pl-[319px]">
            <div className="mt-[21px] text-[19px] font-bold leading-[28px]">G</div>
            <div className="mt-[10px] text-[16px] leading-[21px] text-[#111]">
              {docLines.map(([t, gap], i) => (
                <div key={i} className={gap}>{t}</div>
              ))}
            </div>
          </div>
          <div className="h-[154px] shrink-0 border-b border-[#b4b4b4] bg-white" />
          <div className="flex grow flex-col border-l border-[#b4b4b4] bg-[#efefef] pl-[6px]">
            <h2 className="h-[51px] whitespace-nowrap pl-[13px] pt-[11px] font-['DejaVu_Sans','Noto_Sans',sans-serif] text-[24px] font-bold leading-[36px] tracking-[-0.6px]">
              Plantillas de proyectos
            </h2>
            <div className="grow border-l border-t border-[#b4b4b4] bg-white pl-2 pt-2">
              <div className="flex h-[194px] rounded-l-[14px] bg-[#efefef] py-[9px] pl-[9px]">
                <div className="h-[177px] w-[250px] shrink-0 rounded-lg bg-white px-5 pt-5">
                  <svg viewBox="0 0 211 138" className="h-[138px] w-[211px]">
                    <rect x=".5" y=".5" width="210" height="137" fill="none" stroke="#cfcfcf" strokeDasharray="4 2" />
                  </svg>
                </div>
                <div className="whitespace-nowrap pl-[30px]">
                  <div className="mt-[12px] text-[20px] font-bold leading-[28px]">Nu</div>
                  <div className="mt-[18px] text-[16px] leading-[22px] tracking-[-0.3px]">EPS</div>
                </div>
              </div>
            </div>
          </div>
        </div>
      </div>

      <div className={menuBox + " left-0 top-8 h-[901px] w-[703px]"}>
        <div className="-mt-px">
          {mainItems.map((item, i) =>
            item ? (
              <Row key={i} item={item} keyWidth="w-[192px]" iconShift="mt-0.5" />
            ) : (
              <div key={i} className="ml-[6px] mr-[6px] h-[2px] border-t border-[#bdbdbd]" />
            ),
          )}
        </div>
      </div>

      <div className={menuBox + " left-[702px] top-[98px] h-[561px] w-[625px]"}>
        <div className="-mt-px">
          {subItems.map((item) => (
            <Row key={item.label} item={item} keyWidth="w-[198px]" iconShift="mt-px" />
          ))}
        </div>
      </div>
    </div>
  );
}
